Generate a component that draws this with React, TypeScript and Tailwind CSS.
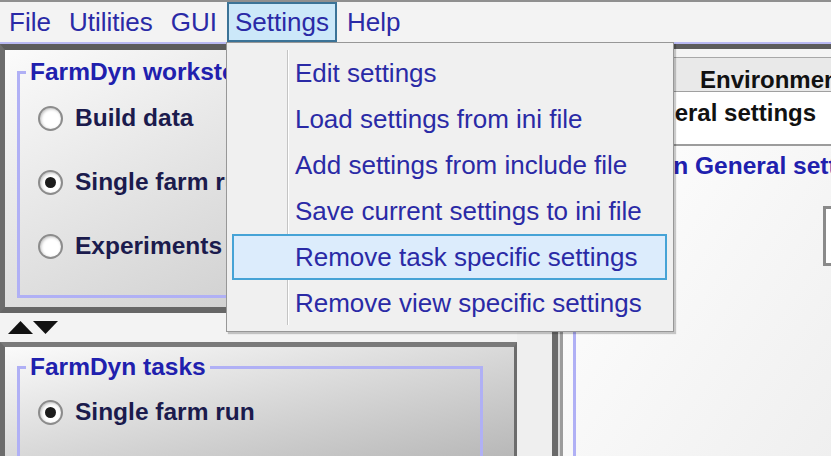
import React from "react"

const menuBar = ["File", "Utilities", "GUI", "Settings", "Help"]

const settingsItems = [
  "Edit settings",
  "Load settings from ini file",
  "Add settings from include file",
  "Save current settings to ini file",
  "Remove task specific settings",
  "Remove view specific settings",
]

function Radio({ checked }: { checked?: boolean }) {
  return (
    <span className="w-[25px] h-[25px] rounded-full border-2 border-[#8c8c8c] bg-white shadow-[inset_1px_1px_3px_rgba(0,0,0,0.25)] flex items-center justify-center shrink-0">
      {checked && <span className="w-[11px] h-[11px] rounded-full bg-[#1c1c1c]" />}
    </span>
  )
}

function Option({ label, checked }: { label: string; checked?: boolean }) {
  return (
    <div className="h-[28px] flex items-center gap-[12px]">
      <Radio checked={checked} />
      <span className="text-[24.5px] font-bold text-[#1b1b4d] leading-none">{label}</span>
    </div>
  )
}

function SettingsMenu() {
  return (
    <div className="absolute left-[-3px] top-[38px] w-[448px] h-[290px] z-10 bg-[#f0f0f0] border border-[#979797] shadow-[2px_2px_1px_rgba(0,0,0,0.2)] pt-[7px] pl-[5px] pr-[6px]">
      {/* gutter */}
      <div className="absolute left-[60px] top-[7px] bottom-[6px] w-[2px] border-l border-[#c4c4c4] bg-white" />
      <div className="relative flex flex-col">
        {settingsItems.map((item, i) => (
          <div
            key={item}
            className={`h-[46px] flex items-center pl-[61px] border-2 ${
              i === 4 ? "bg-[#dcecfc] border-[#46a3d6]" : "border-transparent"
            }`}
          >
            <span className="text-[26px] text-[#2a2aa6] leading-none">{item}</span>
          </div>
        ))}
      </div>
    </div>
  )
}

export default function App() {
  return (
    <div className="w-[831px] h-[456px] overflow-hidden flex flex-col bg-[#f0f0f0] font-['Liberation_Sans',Arial,sans-serif]">
      {/* Menu bar */}
      <div className="h-[44px] shrink-0 border-t-2 border-t-[#8f8f8f] border-b-2 border-b-[#b9b9f2] bg-[#f3f3f3] flex items-center gap-[2px] pl-[1px]">
        {menuBar.map((m) => (
          <div
            key={m}
            className={`relative h-[40px] px-[6px] border-2 flex items-center ${
              m === "Settings" ? "bg-[#cce8f9] border-[#3b7397]" : "border-transparent"
            }`}
          >
            <span className="text-[26px] text-[#2a2aa6] leading-none">{m}</span>
            {m === "Settings" && <SettingsMenu />}
          </div>
        ))}
      </div>

      {/* Body */}
      <div className="flex flex-1 min-h-0">
        {/* Left column */}
        <div className="w-[517px] shrink-0 flex flex-col">
          <div className="h-[269px] shrink-0 border-t-[6px] border-b-[6px] border-l-[5px] border-r-[3px] border-t-[#5c5c5c] border-b-[#666666] border-l-[#6c6c6c] border-r-[#6c6c6c] bg-linear-to-br from-[#fbfbfb] to-[#c2c2c2] pl-[12px] pt-[8px] overflow-hidden">
            <fieldset className="w-[466px] h-[240px] border-[3px] border-[#b0b0f5]">
              <legend className="ml-[6px] px-[4px] text-[24.5px] font-bold text-[#2020ae] leading-[28px]">
                FarmDyn workstep
              </legend>
              <div className="pl-[18px] pt-[18px] flex flex-col gap-[36px]">
                <Option label="Build data" />
                <Option label="Single farm run" checked />
                <Option label="Experiments" />
              </div>
            </fieldset>
          </div>

          {/* Splitter */}
          <div className="h-[29px] shrink-0 flex items-center pl-[8px] bg-[#f3f3f3]">
            <svg width="50" height="13" viewBox="0 0 50 13">
              <polygon points="0,13 12.5,0 25,13" fill="#111" />
              <polygon points="25,0 50,0 37.5,13" fill="#111" />
            </svg>
          </div>

          <div className="flex-1 min-h-0 border-t-[5px] border-l-[5px] border-r-[3px] border-t-[#7a7a7a] border-l-[#6c6c6c] border-r-[#6c6c6c] bg-linear-to-br from-[#fbfbfb] to-[#b8b8b8] pl-[12px] pt-[6px] overflow-hidden">
            <fieldset className="w-[466px] h-[200px] border-[3px] border-[#b0b0f5]">
              <legend className="ml-[6px] px-[4px] text-[24.5px] font-bold text-[#2020ae] leading-[28px]">
                FarmDyn tasks
              </legend>
              <div className="pl-[18px] pt-[17px] flex flex-col">
                <Option label="Single farm run" checked />
              </div>
            </fieldset>
          </div>
        </div>

        {/* Divider column */}
        <div className="w-[35px] shrink-0 bg-[#efefef]" />

        {/* Right panel */}
        <div className="flex-1 min-w-0 flex">
          <div className="w-[6px] bg-[#6a6a6a]" />
          <div className="w-[2px] bg-[#d8d8d8]" />
          <div className="w-[3px] bg-[#9c9c9c]" />
          <div className="flex-1 min-w-0 flex flex-col overflow-hidden border-t-[5px] border-t-[#5c5c5c]">
            <div className="h-[9px] shrink-0 bg-[#f4f4f4] border-b border-[#a8a8a8]" />
            <div className="h-[34px] shrink-0 bg-[#e9e9e9] border-b border-[#a0a0a0] flex items-center pt-[10px] pl-[137px]">
              <span className="text-[24px] font-bold text-[#111] leading-none whitespace-nowrap">Environment</span>
            </div>
            <div className="h-[54px] shrink-0 bg-white border-b-2 border-[#9c9c9c] flex items-center pb-[10px] pl-[65px]">
              <span className="text-[24px] font-bold text-[#111] leading-none whitespace-nowrap">General settings</span>
            </div>
            <div className="flex-1 bg-linear-to-br from-white to-[#ededed] pl-[10px] pt-[6px]">
              <fieldset className="w-[420px] h-[400px] border-[3px] border-r-0 border-[#b0b0f5]">
                <legend className="ml-[3px] px-[3px] text-[24.5px] font-bold text-[#2020ae] leading-[28px] whitespace-nowrap">
                  FarmDyn General settings
                </legend>
                <div className="ml-[247px] mt-[26px] w-[60px] h-[60px] border-[3px] border-[#8a8a8a] bg-white" />
              </fieldset>
            </div>
          </div>
        </div>
      </div>
    </div>
  )
}
